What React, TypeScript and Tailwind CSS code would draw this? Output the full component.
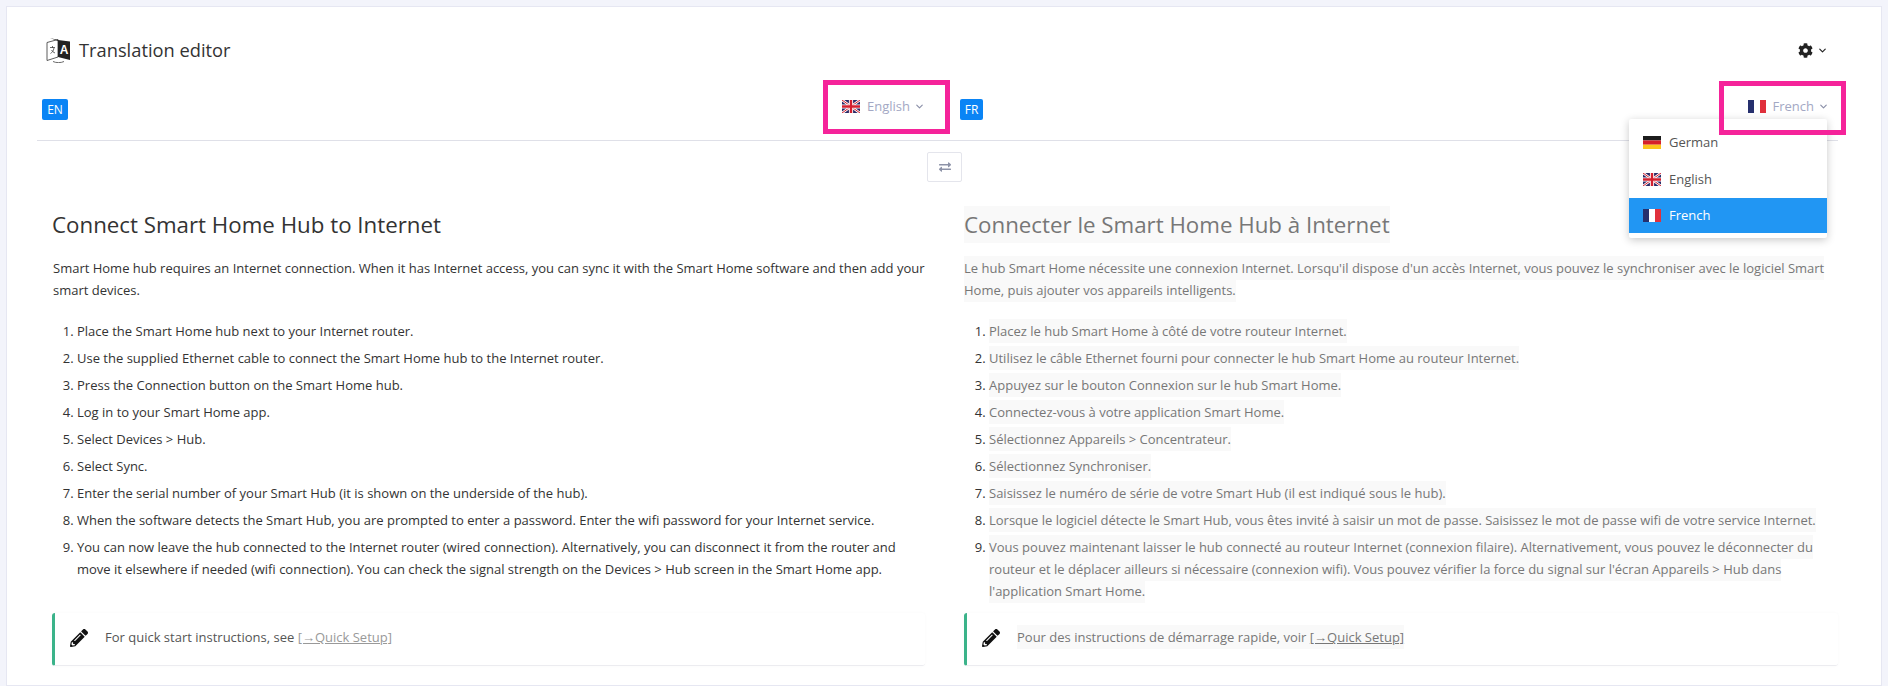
import { FaCog, FaExchangeAlt, FaPencilAlt } from 'react-icons/fa';
import { ChevronDown } from 'lucide-react';

const enSteps = [
  'Place the Smart Home hub next to your Internet router.',
  'Use the supplied Ethernet cable to connect the Smart Home hub to the Internet router.',
  'Press the Connection button on the Smart Home hub.',
  'Log in to your Smart Home app.',
  'Select Devices > Hub.',
  'Select Sync.',
  'Enter the serial number of your Smart Hub (it is shown on the underside of the hub).',
  'When the software detects the Smart Hub, you are prompted to enter a password. Enter the wifi password for your Internet service.',
  'You can now leave the hub connected to the Internet router (wired connection). Alternatively, you can disconnect it from the router and move it elsewhere if needed (wifi connection). You can check the signal strength on the Devices > Hub screen in the Smart Home app.',
];

const frSteps = [
  'Placez le hub Smart Home à côté de votre routeur Internet.',
  'Utilisez le câble Ethernet fourni pour connecter le hub Smart Home au routeur Internet.',
  'Appuyez sur le bouton Connexion sur le hub Smart Home.',
  'Connectez-vous à votre application Smart Home.',
  'Sélectionnez Appareils > Concentrateur.',
  'Sélectionnez Synchroniser.',
  'Saisissez le numéro de série de votre Smart Hub (il est indiqué sous le hub).',
  'Lorsque le logiciel détecte le Smart Hub, vous êtes invité à saisir un mot de passe. Saisissez le mot de passe wifi de votre service Internet.',
  "Vous pouvez maintenant laisser le hub connecté au routeur Internet (connexion filaire). Alternativement, vous pouvez le déconnecter du routeur et le déplacer ailleurs si nécessaire (connexion wifi). Vous pouvez vérifier la force du signal sur l'écran Appareils > Hub dans l'application Smart Home.",
];

function FlagUK() {
  return (
    <svg width="18" height="13" viewBox="0 0 18 13" className="shrink-0">
      <rect width="18" height="13" fill="#2b2a66" />
      <path d="M0 0L18 13M18 0L0 13" stroke="#fff" strokeWidth="2.6" />
      <path d="M0 0L18 13M18 0L0 13" stroke="#d3202f" strokeWidth="1" />
      <path d="M9 0V13M0 6.5H18" stroke="#fff" strokeWidth="4.2" />
      <path d="M9 0V13M0 6.5H18" stroke="#d3202f" strokeWidth="2.4" />
    </svg>
  );
}

function FlagFR() {
  return (
    <svg width="18" height="13" viewBox="0 0 18 13" className="shrink-0">
      <rect width="6" height="13" fill="#26306e" />
      <rect x="6" width="6" height="13" fill="#fff" />
      <rect x="12" width="6" height="13" fill="#e0303c" />
    </svg>
  );
}

function FlagDE() {
  return (
    <svg width="18" height="13" viewBox="0 0 18 13" className="shrink-0">
      <rect width="18" height="4.4" fill="#1c1c1c" />
      <rect y="4.4" width="18" height="4.3" fill="#d6202a" />
      <rect y="8.7" width="18" height="4.3" fill="#fbc41c" />
    </svg>
  );
}

function TranslateIcon() {
  return (
    <svg width="25" height="26" viewBox="0 0 25 26" className="shrink-0">
      <path d="M1 5.5L12 2.5V20L1 23.5Z" fill="#fff" stroke="#333" strokeWidth="0.8" />
      <path d="M4 1L12 4V20L24 23V4.5L12 3Z" fill="#222" />
      <path d="M4 10.5H9M6.5 9V11M8 11C7.5 14 6 15.5 4.5 16.5M5.5 13C6.3 14.5 7.5 15.5 9 16" fill="none" stroke="#444" strokeWidth="0.8" />
      <text x="18" y="17" textAnchor="middle" fontSize="12" fontWeight="700" fill="#fff" fontFamily="'Liberation Sans', sans-serif">A</text>
      <path d="M7 24.5C10 26 15 26 18 24.5" fill="none" stroke="#444" strokeWidth="0.8" />
    </svg>
  );
}

function PinkBox({ className }: { className: string }) {
  return <div className={`absolute border-[5px] border-[#f5239a] pointer-events-none ${className}`} />;
}

function Highlight({ children }: { children: React.ReactNode }) {
  return <span className="bg-[#f9f9f9] [box-decoration-break:clone] py-[3px]">{children}</span>;
}

function Note({ children }: { children: React.ReactNode }) {
  return (
    <div className="flex items-center h-[53px] rounded-[3px] border-l-[3px] border-l-[#3bb38a] border-b border-b-[#ececf0] shadow-[0_0_3px_rgba(0,0,0,0.03)] pl-[15px] pb-[2px]">
      <FaPencilAlt className="text-[18px] text-[#111] shrink-0" />
      <div className="ml-[17px] text-[13px]">{children}</div>
    </div>
  );
}

export default function App() {
  return (
    <div className="h-[686px] overflow-hidden bg-[#f3f4fb] pt-[6px] px-[6px] font-['Open_Sans','Noto_Sans',sans-serif] text-[13px] text-[#333]">
      <div className="relative h-[680px] w-[1876px] bg-white border border-[#e6e7f2] pl-[30px] pr-[43px]">
        <div className="flex items-center justify-between h-[73px] pt-[13px] pl-[9px] pr-[10px]">
          <div className="flex items-center gap-[8px]">
            <TranslateIcon />
            <span className="text-[18.3px] text-[#333]">Translation editor</span>
          </div>
          <div className="flex items-center gap-[4px] text-[#222]">
            <FaCog className="text-[15px]" />
            <ChevronDown size={11} strokeWidth={2.5} />
          </div>
        </div>

        <div className="grid grid-cols-[910px_1fr] gap-[8px] h-[61px] border-b border-[#dfe0e8]">
          <div className="flex items-start justify-between pt-[19px] pl-[5px] pr-[22px]">
            <span className="flex items-center justify-center w-[26px] h-[21px] rounded-[2px] bg-[#0a84f5] text-white text-[12px]">EN</span>
            <div className="flex items-center gap-[7px] text-[#a3a8c4] -mt-[2px]">
              <FlagUK />
              <span>English</span>
              <ChevronDown size={11} strokeWidth={2.5} className="-ml-[3px] text-[#8a8fa8]" />
            </div>
          </div>
          <div className="flex items-start justify-between pt-[19px] pl-[5px] pr-[9px]">
            <span className="flex items-center justify-center w-[23px] h-[21px] rounded-[2px] bg-[#0a84f5] text-white text-[12px]">FR</span>
            <div className="flex items-center gap-[7px] text-[#a3a8c4] -mt-[2px]">
              <FlagFR />
              <span>French</span>
              <ChevronDown size={11} strokeWidth={2.5} className="-ml-[3px] text-[#8a8fa8]" />
            </div>
          </div>
        </div>

        <div className="flex justify-center mt-[11px] pl-[14px]">
          <div className="flex items-center justify-center w-[35px] h-[30px] rounded-[2px] border border-[#e4e5ec] bg-white text-[#8d93a8]">
            <FaExchangeAlt className="text-[12px]" />
          </div>
        </div>

        <div className="grid grid-cols-[910px_1fr] gap-[8px] mt-[24px]">
          <div className="flex flex-col pl-[16px] pr-[22px]">
            <h1 className="text-[22.3px] leading-[38px] text-[#333] -ml-[1px]">Connect Smart Home Hub to Internet</h1>
            <p className="mt-[13px] leading-[22px]">
              Smart Home hub requires an Internet connection. When it has Internet access, you can sync it with the Smart Home software and then add your smart devices.
            </p>
            <ol className="mt-[19px] list-decimal pl-[24px] leading-[22px]">
              {enSteps.map((s) => (
                <li key={s} className="mb-[5px]">{s}</li>
              ))}
            </ol>
            <div className="mt-auto -ml-[1px]">
              <Note>
                <span className="text-[#555]">For quick start instructions, see </span>
                <a className="text-[#999] underline">[→Quick Setup]</a>
              </Note>
            </div>
          </div>
          <div className="flex flex-col pl-[9px] text-[#777]">
            <h1 className="text-[22.3px] leading-[38px]"><Highlight>Connecter le Smart Home Hub à Internet</Highlight></h1>
            <p className="mt-[13px] leading-[22px]">
              <Highlight>Le hub Smart Home nécessite une connexion Internet. Lorsqu'il dispose d'un accès Internet, vous pouvez le synchroniser avec le logiciel Smart Home, puis ajouter vos appareils intelligents.</Highlight>
            </p>
            <ol className="mt-[19px] list-decimal pl-[25px] leading-[22px] marker:text-[#333]">
              {frSteps.map((s) => (
                <li key={s} className="mb-[5px]"><Highlight>{s}</Highlight></li>
              ))}
            </ol>
            <div className="mt-[6px]">
              <Note>
                <Highlight>
                  Pour des instructions de démarrage rapide, voir <a className="underline">[→Quick Setup]</a>
                </Highlight>
              </Note>
            </div>
          </div>
        </div>

        <div className="absolute left-[1622px] top-[112px] w-[198px] h-[119px] py-[5px] bg-white rounded-[2px] shadow-[0_2px_8px_rgba(0,0,0,0.22)] text-[13px] text-[#555]">
          <div className="flex items-center gap-[8px] h-[37px] pl-[14px]"><FlagDE /><span>German</span></div>
          <div className="flex items-center gap-[8px] h-[37px] pl-[14px]"><FlagUK /><span>English</span></div>
          <div className="flex items-center gap-[8px] h-[35px] pl-[14px] bg-[#2196f3] text-white"><FlagFR /><span>French</span></div>
        </div>

        <PinkBox className="left-[816px] top-[73px] w-[127px] h-[54px]" />
        <PinkBox className="left-[1712px] top-[74px] w-[127px] h-[54px]" />
      </div>
    </div>
  );
}
